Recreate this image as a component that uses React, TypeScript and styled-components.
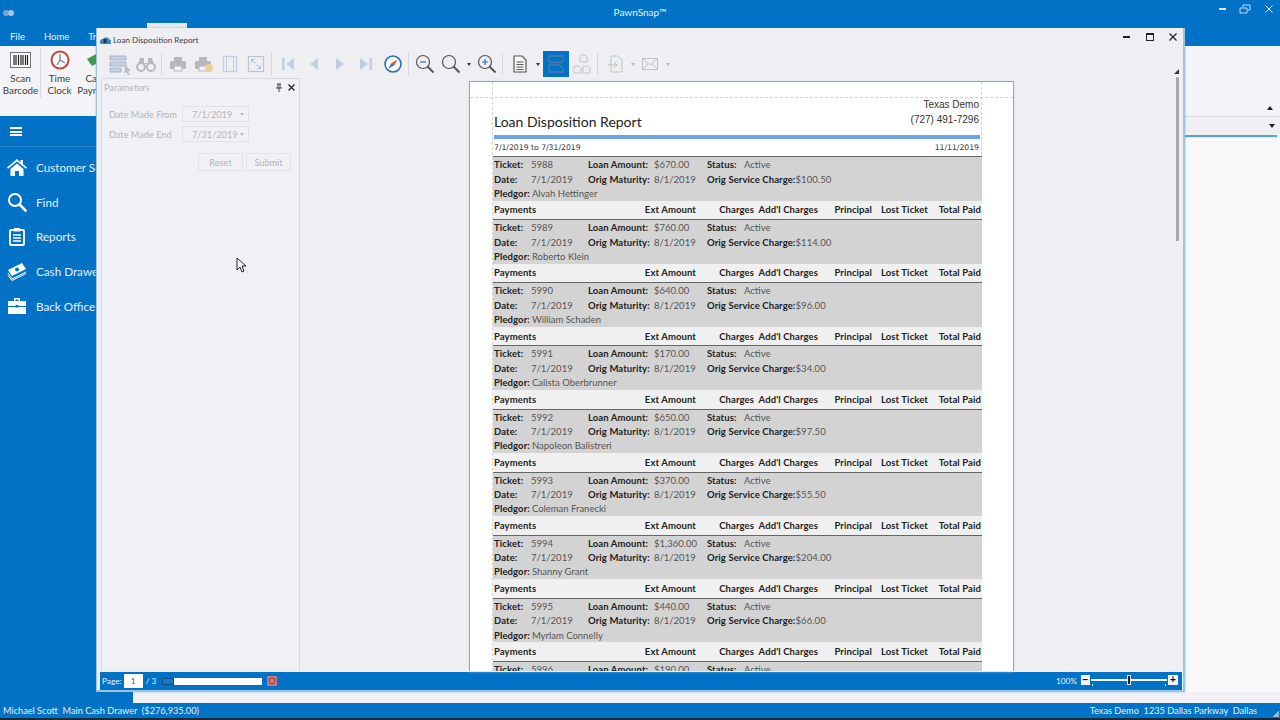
import React from "react";
import styled, { createGlobalStyle } from "styled-components";

const BLUE = "#0272c6";
const Global = createGlobalStyle`
  html, body { margin: 0; padding: 0; width: 1280px; height: 720px; overflow: hidden; background: #f4f4f8; }
  * { box-sizing: border-box; }
  body { font-family: "Lato", "Open Sans", "Liberation Sans", sans-serif; }
`;

const Shell = styled.div`
  position: relative; width: 1280px; height: 720px; display: flex; flex-direction: column; overflow: hidden;
  background: #f4f4f8; border-bottom: 2px solid #1d2a36;
`;
const TitleBar = styled.header`
  height: 27px; flex: none; background: ${BLUE}; color: #e8f3fb; display: flex; align-items: center; justify-content: center;
  position: relative; font-size: 10px; padding-bottom: 3px;
`;
const Quick = styled.div`position: absolute; left: 3px; top: 10px; display: flex;`;
const QuickDot = styled.span<{ $c: string }>`width: 6px; height: 6px; border-radius: 50%; background: ${p => p.$c}; margin-right: -1px;`;
const WinButtons = styled.div`position: absolute; right: 6px; top: 4px; display: flex; gap: 13px; align-items: center;`;
const Tabs = styled.nav`
  height: 19px; flex: none; background: ${BLUE}; display: flex; color: #e8f3fb; font-size: 9.5px; padding-left: 10px; gap: 19px; align-items: center;
`;
const Ribbon = styled.section`
  height: 70px; flex: none; background: #f4f4f8; display: flex; padding: 2px 0 0 3px; position: relative;
`;
const RibbonBtn = styled.div<{ $w: number }>`
  width: ${p => p.$w}px; display: flex; flex-direction: column; align-items: center; color: #3c3c42; font-size: 9.8px; line-height: 12px; text-align: center;
`;
const RibbonIcon = styled.div`height: 24px; display: flex; align-items: center; justify-content: center; margin: 0;`;
const RibbonSep = styled.div`width: 1px; height: 50px; background: #d8d8de; margin: 0 2px;`;
const RibbonRight = styled.div`position: absolute; right: 7px; bottom: 6px; width: 0; height: 0; border: 3px solid transparent; border-bottom: 4px solid #222; border-top: 0;`;
const Body = styled.div`flex: 1; display: flex; min-height: 0;`;
const Side = styled.aside`width: 133px; background: ${BLUE}; color: #e3f0fa; flex: none; display: flex; flex-direction: column;`;
const Burger = styled.div`height: 31px; padding: 11px 0 0 10px; border-bottom: 1px solid #2b88cf;`;
const BurgerLines = styled.div`width: 12px; height: 9px; border-top: 2px solid #fff; border-bottom: 2px solid #fff; position: relative; &::after { content: ""; position: absolute; left: 0; right: 0; top: 1.5px; height: 2px; background: #fff; }`;
const SideItem = styled.div`height: 34.6px; display: flex; align-items: center; gap: 9px; padding-left: 7px; font-size: 11.7px; white-space: nowrap;`;
const SideIcon = styled.div`width: 20px; height: 20px; display: flex; align-items: center; justify-content: center;`;
const SideList = styled.div`padding-top: 3px;`;
const Content = styled.main`flex: 1; display: flex; flex-direction: column; background: #f8f8fb;`;
const ContentBar = styled.div`height: 19px; background: #f0f0f4; border-top: 1px solid #d4d4dc; display: flex; justify-content: flex-end; align-items: center; padding-right: 5px;`;
const DownCaret = styled.span`width: 0; height: 0; border: 3px solid transparent; border-top: 4px solid #222; border-bottom: 0;`;
const ContentLine = styled.div`height: 2px; background: #5ea3be; margin-right: 3px; box-shadow: 0 1px 1px #cfe6f4;`;
const ContentFill = styled.div`flex: 1;`;
const ContentFoot = styled.div`height: 11px; background: #f1f1f5;`;
const StatusBar = styled.footer`
  height: 15px; flex: none; background: ${BLUE}; color: #e3f0fa; font-size: 9.2px; display: flex; justify-content: space-between; align-items: center; padding: 0 23px 0 3px; position: relative; white-space: pre;
`;
const Grip = styled.div`position: absolute; right: 1px; bottom: 1px; width: 6px; height: 6px; background: linear-gradient(135deg, transparent 50%, #8fc0e4 50%);`;

const Win = styled.div`
  position: absolute; left: 96px; top: 28px; width: 1089px; height: 664px; background: #eeeef3; border: 1px solid #9cc4dc; border-width: 0 2px 2px 1px;
  display: flex; flex-direction: column; padding: 0 1px 0 3px; box-shadow: 0 0 2px rgba(60,120,160,.45);
`;
const TopNotch = styled.div`position: absolute; left: 147px; top: 23px; width: 40px; height: 5px; background: #e6e9ef;`;
const WinTitle = styled.div`height: 22px; flex: none; display: flex; align-items: center; font-size: 8.1px; color: #404048; gap: 2px; position: relative; margin-left: -1px; padding-top: 1px;`;
const WinCtl = styled.div`position: absolute; right: 4px; top: 4px; display: flex; gap: 13px; align-items: center;`;
const Toolbar = styled.div`height: 28px; flex: none; display: flex; align-items: center; position: relative;`;
const Tool = styled.div<{ $w: number; $on?: boolean }>`
  width: ${p => p.$w}px; height: 26px; flex: none; display: flex; align-items: center; justify-content: center; background: ${p => (p.$on ? BLUE : "transparent")};
`;
const ToolSep = styled.div<{ $after?: number }>`width: 1px; height: 22px; background: #d6d6dc; flex: none; margin: 0 ${p => p.$after ?? 3}px 0 2px;`;
const ToolGrip = styled.div`width: 3px; height: 13px; margin: 0 3px 0 1px; flex: none; background-image: radial-gradient(#8a8a90 35%, transparent 40%); background-size: 2px 2px;`;
const Caret = styled.span<{ $c?: string }>`width: 0; height: 0; border: 2.5px solid transparent; border-top: 3px solid ${p => p.$c || "#333"}; border-bottom: 0;`;

const Main = styled.div`flex: 1; min-height: 0; display: flex;`;
const Params = styled.div`width: 199px; margin-left: 1px; flex: none; border: 1px solid #d8d8e2; border-bottom: 0; background: #f1f1f5; color: #b4b4ba; font-size: 9.2px; display: flex; flex-direction: column;`;
const ParamHead = styled.div`height: 15px; display: flex; align-items: center; padding: 0 3px 0 2px; gap: 4px; margin-top: 1px;`;
const ParamDots = styled.div`flex: 1; height: 5px; background-image: radial-gradient(#d2d2d8 35%, transparent 40%); background-size: 2px 2px;`;
const ParamRow = styled.div`display: flex; align-items: center; height: 16px; margin: 0 0 4px 7px; white-space: nowrap;`;
const ParamLabel = styled.div`width: 73px;`;
const ParamInput = styled.div`width: 67px; height: 16px; border: 1px solid #e2e2e8; display: flex; align-items: center; justify-content: space-between; padding: 0 4px 0 9px;`;
const ParamRows = styled.div`padding-top: 11px;`;
const ParamBtns = styled.div`display: flex; justify-content: flex-end; gap: 3px; padding: 7px 8px 0 0;`;
const ParamBtn = styled.div`width: 45px; height: 18px; border: 1px solid #e2e2e8; display: flex; align-items: center; justify-content: center;`;
const Doc = styled.div`flex: 1; min-width: 0; padding: 3px 0 0 169px; position: relative; display: flex;`;
const Page = styled.div`
  width: 545px; background: #fff; border: 1px solid #82aacb; border-bottom: 0; position: relative; overflow: hidden; padding: 15px 31px 0 23px; box-shadow: 0 0 3px #d7e8f5;
`;
const DashV = styled.div<{ $x: number }>`position: absolute; top: 0; bottom: 0; left: ${p => p.$x}px; border-left: 1px dashed #d5d5d5;`;
const DashH = styled.div`position: absolute; top: 15px; left: 0; right: 0; border-top: 1px dashed #d5d5d5;`;
const Head = styled.div`height: 38px; display: flex; justify-content: space-between; align-items: flex-end; padding: 0 3px 0 1px; position: relative;`;
const ReportTitle = styled.h1`margin: 0 0 4px; font: 400 14px "Lato", sans-serif; color: #222; line-height: 18px;`;
const Contact = styled.div`font: 10px/15px "Liberation Sans", sans-serif; color: #333; text-align: right; margin-bottom: 8px;`;
const Rule = styled.div`height: 4px; background: #6ba3e8; margin: 0 2px 0 1px;`;
const Dates = styled.div`height: 17px; display: flex; justify-content: space-between; align-items: center; padding: 0 3px 0 1px; font: 7.7px "DejaVu Sans", sans-serif; color: #333;`;
const Record = styled.div`height: 63.14px; font: 9.5px "Lato", sans-serif; color: #555; position: relative;`;
const Detail = styled.div`height: 44.5px; background: #d3d3d3; border-top: 1px solid #666; display: flex; flex-direction: column; padding: 0 0 0 1px;`;
const Line = styled.div<{ $h: number }>`height: ${p => p.$h}px; flex: none; display: grid; grid-template-columns: 37px 57px 66px 53px 37px 1fr; align-items: center; white-space: nowrap;`;
const Lbl = styled.b`font-weight: 700; color: #222; letter-spacing: .1px;`;
const ValueInline = styled.span`font-weight: 400; color: #555;`;
const Pledge = styled.div`height: 14px; display: flex; align-items: center; gap: 2px;`;
const Pay = styled.div`height: 18.64px; background: #f0f0f0; display: flex; align-items: center; padding-left: 1px; white-space: nowrap; font-weight: 700; color: #222; letter-spacing: .1px;`;
const PayCell = styled.span<{ $r: number }>`position: absolute; right: ${p => p.$r}px;`;
const Thumb = styled.div`position: absolute; right: 3px; top: -1px; width: 3px; height: 164px; background: #a8a8ae;`;
const ThumbTop = styled.div`position: absolute; right: 3px; top: -9px; width: 0; height: 0; border-left: 5px solid transparent; border-bottom: 5px solid #333;`;

const Bottom = styled.div`height: 18px; flex: none; margin-top: 1px; background: ${BLUE}; color: #e6f2fb; font-size: 8.3px; display: flex; align-items: center; padding: 0 4px 0 2px; gap: 1px;`;
const PageBox = styled.div`width: 19px; height: 14px; background: #fff; color: #555; text-align: center; line-height: 14px; margin: 0 2px 0 1px;`;
const Progress = styled.div`width: 100px; height: 7px; background: #fff; margin: 0 2px 0 5px; display: flex;`;
const ProgFill = styled.div`width: 12px; background: #1b77c2; border: 1px solid #0c4f88;`;
const Spacer = styled.div`flex: 1;`;
const Percent = styled.span`margin-right: 3px;`;
const ZoomBtn = styled.div<{ $w: number }>`width: ${p => p.$w}px; height: 10px; background: #f5f5f5; color: #111; font: 700 10px/9px "Liberation Sans", sans-serif; text-align: center; margin-bottom: 2px;`;
const Track = styled.div`
  width: 76px; height: 2px; background: #fff; position: relative; display: flex; justify-content: center; align-items: center; margin-bottom: 2px;
  &::before, &::after { content: ""; position: absolute; top: 5px; width: 1px; height: 2px; background: #cfe6f4; }
  &::before { left: 1px; }
  &::after { right: 1px; }
`;
const Knob = styled.div`width: 4px; height: 10px; flex: none; background: #222; border: 1px solid #e4e4e4;`;
const Cursor = styled.svg`position: absolute; left: 236px; top: 257px;`;

const S = ({ w = 18, h = 18, children }: { w?: number; h?: number; children: React.ReactNode }) => (
  <svg width={w} height={h} viewBox={`0 0 ${w} ${h}`} fill="none">{children}</svg>
);
const G = "#b6b8be";
const B = "#c3cfe0";
const Ic = {
  params: <S w={26} h={22}><path d="M3 3h16v4H3zM3 9h16v4H3zM3 15h11v4H3z" fill="#c6d2e2" stroke="#aab6c8" /><path d="M18 12l6 6-3 .4 1.5 3-1.4.6-1.5-3-2.2 1.6z" fill="#bbb" /></S>,
  bino: <S w={20} h={18}><circle cx="5" cy="12" r="4" stroke={G} strokeWidth="2" /><circle cx="15" cy="12" r="4" stroke={G} strokeWidth="2" /><path d="M2 10l2-7h4v6h4V3h4l2 7-4-2H6z" fill={G} /></S>,
  print: <S w={18} h={18}><path d="M5 2h8v4H5z" fill={G} /><rect x="1" y="6" width="16" height="8" rx="1.500" fill={G} /><path d="M5 11h8v5H5z" fill="#f1f1f5" stroke={G} /></S>,
  printQ: <S w={20} h={18}><path d="M5 2h8v4H5z" fill={G} /><rect x="1" y="6" width="16" height="8" rx="1.500" fill={G} /><path d="M5 11h8v5H5z" fill="#f1f1f5" stroke={G} /><circle cx="15" cy="13" r="4" fill="#e8cf9a" /></S>,
  page: <S w={16} h={18}><rect x="1.500" y="1.500" width="13" height="15" stroke={B} strokeWidth="1.400" /><path d="M4.500 1.500v15M11.500 1.500v15" stroke={B} /></S>,
  expand: <S w={18} h={18}><rect x="1.500" y="1.500" width="15" height="15" stroke="#c0c4cc" strokeWidth="1.200" /><path d="M4.500 4.500l4 4M13.500 13.500l-4-4M4.500 4.500h3M4.500 4.500v3M13.500 13.500h-3M13.500 13.500v-3" stroke="#a9c1d8" /></S>,
  first: <S w={14} h={14}><path d="M1 1h2.500v12H1zM13 1v12L5 7z" fill={B} /></S>,
  prev: <S w={10} h={14}><path d="M9 1v12L1 7z" fill={B} /></S>,
  next: <S w={10} h={14}><path d="M1 1v12l8-6z" fill={B} /></S>,
  last: <S w={14} h={14}><path d="M10.500 1H13v12h-2.500zM1 1v12l8-6z" fill={B} /></S>,
  compass: <S w={20} h={20}><circle cx="10" cy="10" r="8" fill="#f8f8fb" stroke="#2f6fb5" strokeWidth="1.600" /><path d="M14.500 5.500L11.500 11 8.500 9z" fill="#e2552c" /><path d="M5.500 14.500L8.500 9l3 2z" fill="#2f6fb5" /></S>,
  zoomOut: <S w={20} h={20}><circle cx="8" cy="8" r="6.500" stroke="#555" strokeWidth="1.200" /><path d="M12.500 12.500l6 6" stroke="#555" strokeWidth="2" /><path d="M5 8h6" stroke="#2f6fb5" strokeWidth="1.200" /></S>,
  zoom: <S w={20} h={20}><circle cx="8" cy="8" r="6.500" stroke="#555" strokeWidth="1.200" /><path d="M12.500 12.500l6 6" stroke="#555" strokeWidth="2" /></S>,
  zoomIn: <S w={20} h={20}><circle cx="8" cy="8" r="6.500" stroke="#555" strokeWidth="1.200" /><path d="M12.500 12.500l6 6" stroke="#555" strokeWidth="2" /><path d="M5 8h6M8 5v6" stroke="#2f6fb5" strokeWidth="1.200" /></S>,
  doc: <S w={14} h={18}><path d="M1 1h8l4 4v12H1z" fill="#f8f8fa" stroke="#555" strokeWidth="1.200" /><path d="M3.500 7h7M3.500 9.500h7M3.500 12h7M3.500 14.500h7" stroke="#555" /></S>,
  two: <S w={16} h={18}><rect x="1" y="1" width="14" height="6.500" rx="1.500" stroke="#4a7dab" strokeWidth="1.300" /><path d="M1 10h10l4 3v4H1z" stroke="#4a7dab" strokeWidth="1.300" /></S>,
  multi: <S w={18} h={20}><path d="M7 1h5l2 2v5H7zM1 12h5l2 2v5H1zM10 12h5l2 2v5h-7z" stroke="#c4c6cc" /></S>,
  exp: <S w={16} h={18}><path d="M3 1h7l4 4v12H3z" stroke="#c4c6cc" /><path d="M0 10h9M6 7l3 3-3 3" stroke="#a8cfa8" /></S>,
  mail: <S w={16} h={12}><rect x=".5" y=".5" width="15" height="11" stroke="#c0c2c8" /><path d="M.5 .5L8 7l7.500-6.500M.5 11.500L6 6M15.500 11.500L10 6" stroke="#c0c2c8" /></S>,
};
const side = {
  home: <S w={20} h={18}><path d="M10 1L0 9.500l1 1.300L10 3.500l9 7.300 1-1.300-4-3.300V2h-2.500v2.500z" fill="#fff" /><path d="M3.500 11L10 5.500l6.500 5.500V18H12v-5H8v5H3.500z" fill="#fff" /></S>,
  find: <S w={20} h={20}><circle cx="8" cy="8" r="6" stroke="#fff" strokeWidth="2" /><path d="M12.500 12.500l6 6" stroke="#fff" strokeWidth="2.600" strokeLinecap="round" /></S>,
  rep: <S w={16} h={19}><rect x="1" y="3" width="14" height="15" rx="1" stroke="#fff" strokeWidth="1.800" /><path d="M5 1h6v3.500H5z" fill="#fff" /><path d="M4 8h8M4 11h8M4 14h8" stroke="#fff" strokeWidth="1.500" /></S>,
  cash: <S w={20} h={20}><path d="M1 9L15 2l4 6L5 15z" fill="#fff" /><circle cx="10" cy="8.500" r="2" fill={BLUE} /><path d="M1 12l4 6 14-7M1 14.500l4 5 14-7" stroke="#fff" /></S>,
  bag: <S w={18} h={17}><path d="M6 1h6v3h-1.500V2.500h-3V4H6z" fill="#fff" /><path d="M0 4h18v5H0zM0 10h18v7H0z" fill="#fff" /><rect x="7.500" y="8" width="3" height="2.500" fill={BLUE} /></S>,
};

const rows = [
  ["5988", "$670.00", "$100.50", "Alvah Hettinger"],
  ["5989", "$760.00", "$114.00", "Roberto Klein"],
  ["5990", "$640.00", "$96.00", "William Schaden"],
  ["5991", "$170.00", "$34.00", "Calista Oberbrunner"],
  ["5992", "$650.00", "$97.50", "Napoleon Balistreri"],
  ["5993", "$370.00", "$55.50", "Coleman Franecki"],
  ["5994", "$1,360.00", "$204.00", "Shanny Grant"],
  ["5995", "$440.00", "$66.00", "Myrlam Connelly"],
  ["5996", "$190.00", "$28.50", "Lavada Kunze"],
];
const cols: [string, number][] = [["Ext Amount", 286], ["Charges", 228], ["Add'l Charges", 164], ["Principal", 110], ["Lost Ticket", 54], ["Total Paid", 1]];

export default function App() {
  return (
    <Shell>
      <Global />
      <TitleBar>
        <Quick><QuickDot $c="#7fa6c8" /><QuickDot $c="#a8c8e0" /></Quick>
        PawnSnap™
        <WinButtons>
          <S w={10} h={10}><path d="M3 5h7" stroke="#dceefa" strokeWidth="2" /></S>
          <S w={12} h={10}><path d="M1 4h7v5H1zM4 3V1h7v5H9" stroke="#bfe0f6" /></S>
          <S w={10} h={10}><path d="M1.500 1.500l7 7M8.500 1.500l-7 7" stroke="#dceefa" /></S>
        </WinButtons>
      </TitleBar>
      <Tabs><span>File</span><span>Home</span><span>Transactions</span></Tabs>
      <Ribbon>
        <RibbonBtn $w={35}>
          <RibbonIcon><S w={21} h={16}><rect x=".5" y=".5" width="20" height="15" fill="#fff" stroke="#777" /><path d="M4 3v10M6 3v10M8.500 3v10M11 3v10M13 3v10M15.500 3v10M17.500 3v10" stroke="#222" strokeWidth="1.200" /></S></RibbonIcon>
          Scan Barcode
        </RibbonBtn>
        <RibbonSep />
        <RibbonBtn $w={33}>
          <RibbonIcon><S w={20} h={20}><circle cx="10" cy="10" r="8.500" fill="#fff" stroke="#c5463f" strokeWidth="2" /><path d="M10 10V4M10 10l5 3M10 10l-3 5" stroke="#555" /></S></RibbonIcon>
          Time Clock
        </RibbonBtn>
        <RibbonBtn $w={40}>
          <RibbonIcon><S w={20} h={20}><path d="M1 9l11-6 5 7-11 6z" fill="#3e9a47" /></S></RibbonIcon>
          Cash Payment
        </RibbonBtn>
        <RibbonRight />
      </Ribbon>
      <Body>
        <Side>
          <Burger><BurgerLines /></Burger>
          <SideList>
            <SideItem><SideIcon>{side.home}</SideIcon>Customer Search</SideItem>
            <SideItem><SideIcon>{side.find}</SideIcon>Find</SideItem>
            <SideItem><SideIcon>{side.rep}</SideIcon>Reports</SideItem>
            <SideItem><SideIcon>{side.cash}</SideIcon>Cash Drawer</SideItem>
            <SideItem><SideIcon>{side.bag}</SideIcon>Back Office</SideItem>
          </SideList>
        </Side>
        <Content>
          <ContentBar><DownCaret /></ContentBar>
          <ContentLine />
          <ContentFill />
          <ContentFoot />
        </Content>
      </Body>
      <StatusBar>
        <span>Michael Scott  Main Cash Drawer  ($276,935.00)</span>
        <span>Texas Demo  1235 Dallas Parkway  Dallas</span>
        <Grip />
      </StatusBar>
      <TopNotch />
      <Win>
        <WinTitle>
          <S w={12} h={12}><path d="M1 9a3 3 0 013-4 4 4 0 017 1 2 2 0 01-1 4H3a2 2 0 01-2-1z" fill="#3b87c6" /><rect x="4.500" y="5" width="3" height="4" fill="#333" /></S>
          Loan Disposition Report
          <WinCtl>
            <S w={10} h={10}><path d="M1 5h7" stroke="#222" strokeWidth="2" /></S>
            <S w={10} h={10}><rect x="1.500" y="1.500" width="7" height="7" stroke="#222" /><path d="M1 2h8" stroke="#222" strokeWidth="2" /></S>
            <S w={10} h={10}><path d="M1.500 1.500l7 7M8.500 1.500l-7 7" stroke="#222" strokeWidth="1.200" /></S>
          </WinCtl>
        </WinTitle>
        <Toolbar>
          <ToolGrip />
          <Tool $w={26}>{Ic.params}</Tool><Tool $w={26}>{Ic.bino}</Tool><ToolSep />
          <Tool $w={26}>{Ic.print}</Tool><Tool $w={26}>{Ic.printQ}</Tool><Tool $w={26}>{Ic.page}</Tool><Tool $w={26}>{Ic.expand}</Tool><ToolSep />
          <Tool $w={26}>{Ic.first}</Tool><Tool $w={26}>{Ic.prev}</Tool><Tool $w={26}>{Ic.next}</Tool><Tool $w={26}>{Ic.last}</Tool><Tool $w={27}>{Ic.compass}</Tool><ToolSep />
          <Tool $w={26}>{Ic.zoomOut}</Tool><Tool $w={26}>{Ic.zoom}</Tool><Tool $w={10}><Caret /></Tool><Tool $w={26}>{Ic.zoomIn}</Tool><ToolSep />
          <Tool $w={27}>{Ic.doc}</Tool><Tool $w={10}><Caret /></Tool><Tool $w={26} $on>{Ic.two}</Tool><Tool $w={26}>{Ic.multi}</Tool><ToolSep $after={5} />
          <Tool $w={26}>{Ic.exp}</Tool><Tool $w={8}><Caret $c="#bbb" /></Tool><Tool $w={26}>{Ic.mail}</Tool><Tool $w={10}><Caret $c="#bbb" /></Tool>
        </Toolbar>
        <Main>
          <Params>
            <ParamHead>
              Parameters<ParamDots />
              <S w={8} h={9}><path d="M2 1h4M3 1v4M5 1v4M1 5h6M4 5v4" stroke="#444" /></S>
              <S w={9} h={9}><path d="M1.500 1.500l6 6M7.500 1.500l-6 6" stroke="#222" strokeWidth="1.200" /></S>
            </ParamHead>
            <ParamRows>
              <ParamRow><ParamLabel>Date Made From</ParamLabel><ParamInput>7/1/2019<Caret $c="#b8b8be" /></ParamInput></ParamRow>
              <ParamRow><ParamLabel>Date Made End</ParamLabel><ParamInput>7/31/2019<Caret $c="#b8b8be" /></ParamInput></ParamRow>
            </ParamRows>
            <ParamBtns><ParamBtn>Reset</ParamBtn><ParamBtn>Submit</ParamBtn></ParamBtns>
          </Params>
          <Doc>
            <Page>
              <DashV $x={22} /><DashV $x={511} /><DashH />
              <Head>
                <ReportTitle>Loan Disposition Report</ReportTitle>
                <Contact>Texas Demo<br />(727) 491-7296</Contact>
              </Head>
              <Rule />
              <Dates><span>7/1/2019 to 7/31/2019</span><span>11/11/2019</span></Dates>
              {rows.map(r => (
                <Record key={r[0]}>
                  <Detail>
                    <Line $h={15}><Lbl>Ticket:</Lbl><span>{r[0]}</span><Lbl>Loan Amount:</Lbl><span>{r[1]}</span><Lbl>Status:</Lbl><span>Active</span></Line>
                    <Line $h={14.2}><Lbl>Date:</Lbl><span>7/1/2019</span><Lbl>Orig Maturity:</Lbl><span>8/1/2019</span><Lbl>Orig Service Charge:<ValueInline>{r[2]}</ValueInline></Lbl></Line>
                    <Pledge><Lbl>Pledgor:</Lbl>{r[3]}</Pledge>
                  </Detail>
                  <Pay>Payments{cols.map(([c, x]) => <PayCell key={c} $r={x}>{c}</PayCell>)}</Pay>
                </Record>
              ))}
            </Page>
            <ThumbTop />
            <Thumb />
          </Doc>
        </Main>
        <Bottom>
          Page:<PageBox>1</PageBox>/ 3
          <Progress><ProgFill /></Progress>
          <S w={14} h={12}><rect x="2" y="1" width="10" height="10" rx="1" fill="#c77a80" /><circle cx="7" cy="6" r="3" stroke="#a33" /></S>
          <Spacer />
          <Percent>100%</Percent>
          <ZoomBtn $w={9}>−</ZoomBtn><Track><Knob /></Track><ZoomBtn $w={10}>+</ZoomBtn>
        </Bottom>
      </Win>
      <Cursor width="12" height="16" viewBox="0 0 12 16"><path d="M1 1v12l3-3 2 5 2-1-2-5h4z" fill="#fff" stroke="#222" /></Cursor>
    </Shell>
  );
}
